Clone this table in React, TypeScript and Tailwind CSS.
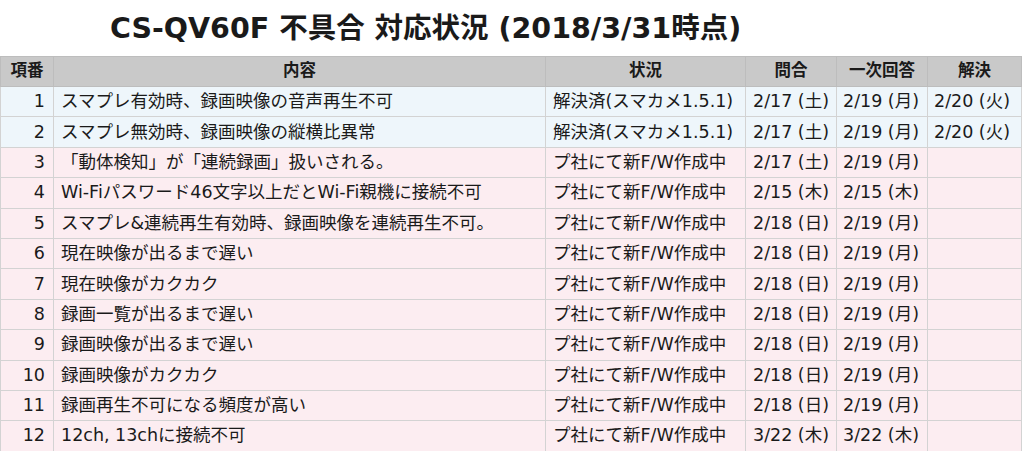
const rows = [
  { no: 1, text: "スマプレ有効時、録画映像の音声再生不可", status: "解決済(スマカメ1.5.1)", ask: "2/17 (土)", first: "2/19 (月)", done: "2/20 (火)", solved: true },
  { no: 2, text: "スマプレ無効時、録画映像の縦横比異常", status: "解決済(スマカメ1.5.1)", ask: "2/17 (土)", first: "2/19 (月)", done: "2/20 (火)", solved: true },
  { no: 3, text: "「動体検知」が「連続録画」扱いされる。", status: "プ社にて新F/W作成中", ask: "2/17 (土)", first: "2/19 (月)", done: "" },
  { no: 4, text: "Wi-Fiパスワード46文字以上だとWi-Fi親機に接続不可", status: "プ社にて新F/W作成中", ask: "2/15 (木)", first: "2/15 (木)", done: "" },
  { no: 5, text: "スマプレ&連続再生有効時、録画映像を連続再生不可。", status: "プ社にて新F/W作成中", ask: "2/18 (日)", first: "2/19 (月)", done: "" },
  { no: 6, text: "現在映像が出るまで遅い", status: "プ社にて新F/W作成中", ask: "2/18 (日)", first: "2/19 (月)", done: "" },
  { no: 7, text: "現在映像がカクカク", status: "プ社にて新F/W作成中", ask: "2/18 (日)", first: "2/19 (月)", done: "" },
  { no: 8, text: "録画一覧が出るまで遅い", status: "プ社にて新F/W作成中", ask: "2/18 (日)", first: "2/19 (月)", done: "" },
  { no: 9, text: "録画映像が出るまで遅い", status: "プ社にて新F/W作成中", ask: "2/18 (日)", first: "2/19 (月)", done: "" },
  { no: 10, text: "録画映像がカクカク", status: "プ社にて新F/W作成中", ask: "2/18 (日)", first: "2/19 (月)", done: "" },
  { no: 11, text: "録画再生不可になる頻度が高い", status: "プ社にて新F/W作成中", ask: "2/18 (日)", first: "2/19 (月)", done: "" },
  { no: 12, text: "12ch, 13chに接続不可", status: "プ社にて新F/W作成中", ask: "3/22 (木)", first: "3/22 (木)", done: "" },
];

// Latin glyphs come from DejaVu Sans (wide, like the reference), Japanese from Noto CJK
const font = { fontFamily: '"DejaVu Sans", "Noto Sans CJK JP", sans-serif' };

export default function App() {
  return (
    <div className="w-[1024px] h-[451px] overflow-hidden bg-white text-[#1a1a1a]" style={font}>
      {/* Title */}
      <div className="h-[56px] pl-[110px] pt-[12px]">
        <h1 className="text-[28.5px] leading-[34px] font-bold">CS-QV60F 不具合 対応状況 (2018/3/31時点)</h1>
      </div>

      {/* Table */}
      <table className="w-[1021px] border-collapse table-fixed text-[17.5px]">
        <colgroup>
          <col className="w-[53px]" />
          <col className="w-[492px]" />
          <col className="w-[200px]" />
          <col className="w-[91px]" />
          <col className="w-[91px]" />
          <col className="w-[94px]" />
        </colgroup>
        <thead>
          <tr className="h-[30px] bg-[#c9c9c9] text-[16.5px] font-bold">
            <th className="border border-[#bdbdbd] text-center">項番</th>
            <th className="border border-[#bdbdbd] text-center">内容</th>
            <th className="border border-[#bdbdbd] text-center">状況</th>
            <th className="border border-[#bdbdbd] text-center">問合</th>
            <th className="border border-[#bdbdbd] text-center">一次回答</th>
            <th className="border border-[#bdbdbd] text-center">解決</th>
          </tr>
        </thead>
        <tbody>
          {rows.map((r) => (
            <tr key={r.no} className={`h-[30.4px] leading-[29px] ${r.solved ? "bg-[#eef6fb]" : "bg-[#fcedf1]"}`}>
              <td className="border border-[#d3d3d3] text-right pr-[8px]">{r.no}</td>
              <td className="border border-[#d3d3d3] pl-[7px] whitespace-nowrap overflow-hidden">{r.text}</td>
              <td className="border border-[#d3d3d3] pl-[7px] whitespace-nowrap overflow-hidden">{r.status}</td>
              <td className="border border-[#d3d3d3] pl-[7px] whitespace-nowrap overflow-hidden">{r.ask}</td>
              <td className="border border-[#d3d3d3] pl-[6px] whitespace-nowrap overflow-hidden">{r.first}</td>
              <td className="border border-[#d3d3d3] pl-[6px] whitespace-nowrap overflow-hidden">{r.done}</td>
            </tr>
          ))}
        </tbody>
      </table>
    </div>
  );
}
